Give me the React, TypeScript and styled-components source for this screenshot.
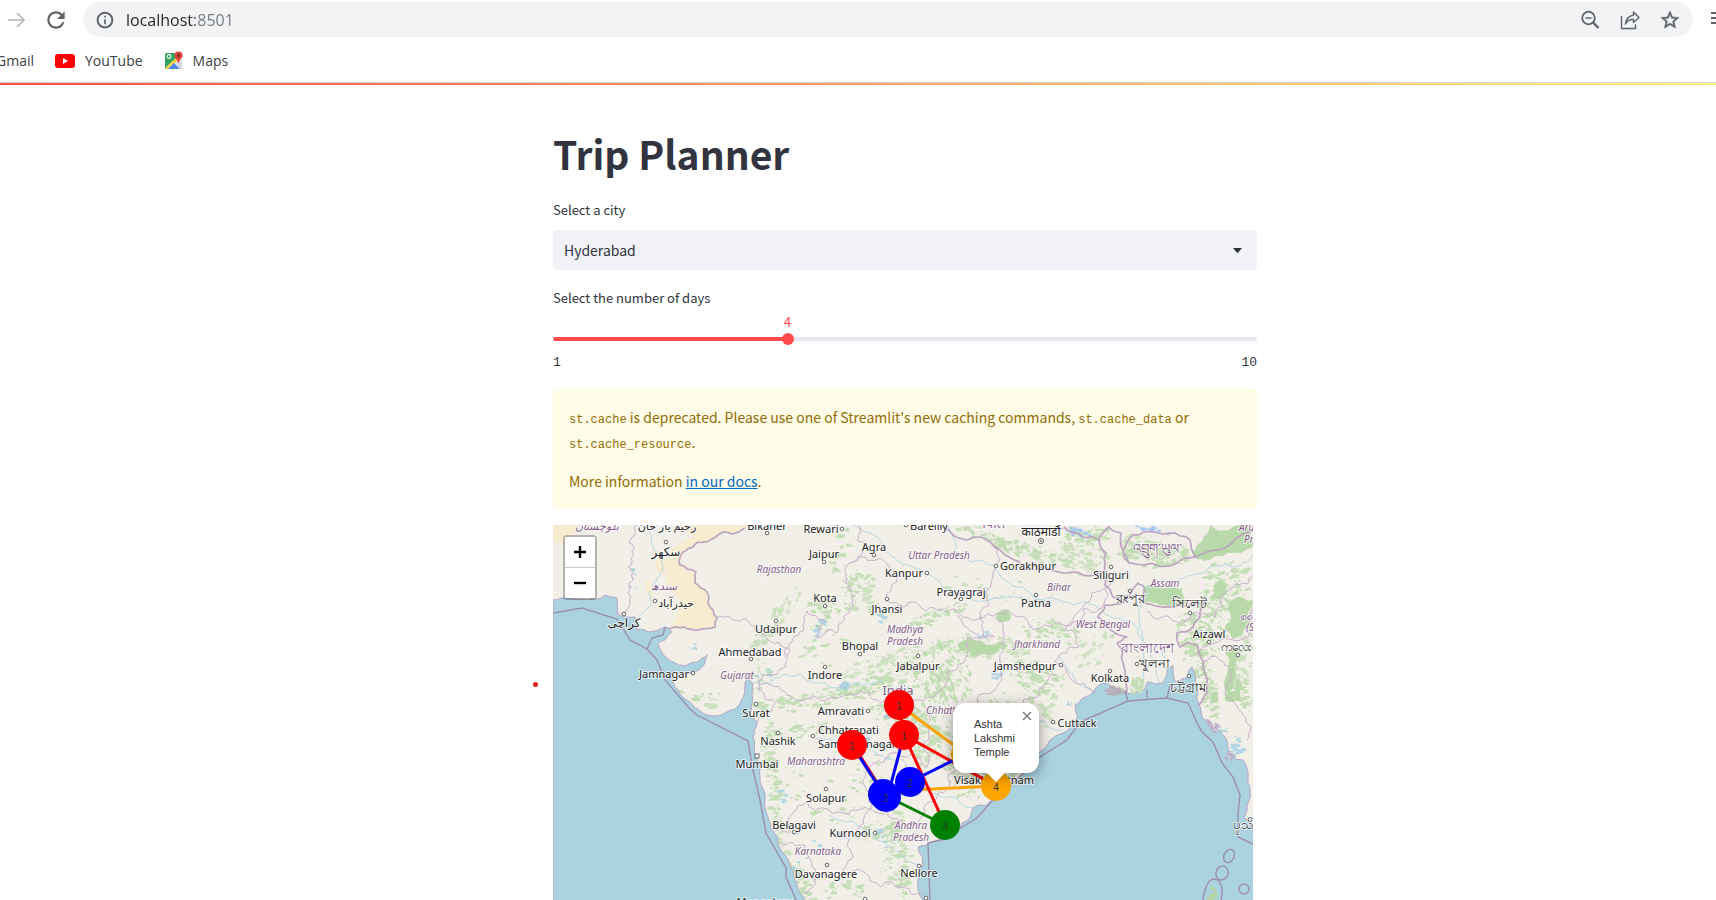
import React, { useState } from "react";
import styled, { createGlobalStyle } from "styled-components";

const GlobalStyle = createGlobalStyle`
  *, *::before, *::after { box-sizing: border-box; }
  body {
    margin: 0;
    background: #ffffff;
    color: #31333f;
    font-family: "Noto Sans CJK JP", "Noto Sans", sans-serif;
  }
`;

/* ---------- page frame ---------- */

const Page = styled.div`
  display: flex;
  flex-direction: column;
  height: 100vh;
  overflow: hidden;
`;

const BrowserChrome = styled.header`
  flex: none;
  overflow: hidden;
  border-bottom: 1px solid #d4d7dc;
  font-family: "Open Sans", "Noto Sans", sans-serif;
`;

const Toolbar = styled.div`
  display: flex;
  align-items: center;
  gap: 14px;
  height: 39px;
  padding-left: 5px;
`;

const IconButton = styled.button<{ $size?: number; $tone?: string }>`
  display: grid;
  place-items: center;
  flex: none;
  width: ${(p) => p.$size ?? 24}px;
  height: ${(p) => p.$size ?? 24}px;
  padding: 0;
  border: 0;
  background: none;
  color: ${(p) => p.$tone ?? "#5f6368"};
`;

const MenuButton = styled(IconButton)`
  margin-right: -15px;
`;

const AddressBar = styled.div`
  display: flex;
  align-items: center;
  flex: 1;
  gap: 16px;
  height: 35px;
  padding: 0 11px 0 12px;
  border-radius: 18px;
  background: #f1f3f4;
`;

const AddressField = styled.label`
  display: flex;
  align-items: center;
  flex: 1;
  gap: 11px;
  color: #5f6368;
`;

const AddressInput = styled.input`
  flex: 1;
  padding: 0;
  border: 0;
  outline: 0;
  font: 16px/24px "Open Sans", "Noto Sans", sans-serif;
  color: transparent;
  background: linear-gradient(90deg, #202124 69px, #74787d 69px);
  -webkit-background-clip: text;
  background-clip: text;
`;

const Bookmarks = styled.nav`
  display: flex;
  align-items: center;
  gap: 21px;
  height: 43px;
  margin-left: -4px;
`;

const Bookmark = styled.a`
  display: flex;
  align-items: center;
  gap: 10px;
  font-size: 14px;
  line-height: 20px;
  color: #3c4043;
  text-decoration: none;
`;

const Viewport = styled.main`
  flex: 1;
  overflow-y: auto;
  scrollbar-width: none;
`;

const Decoration = styled.div`
  height: 2px;
  background: linear-gradient(90deg, #ff4b4b, #fff27c);
`;

const Centered = styled.div`
  padding: 42px 0 80px 94px;
`;

const Column = styled.div`
  width: 100%;
  max-width: 704px;
  margin: 0 auto;
`;

const Title = styled.h1`
  margin: 0 0 21px;
  font-size: 39px;
  font-weight: 700;
  line-height: 52px;
`;

/* ---------- widgets ---------- */

const Field = styled.div`
  margin-bottom: 18px;
`;

const FieldLabel = styled.label`
  display: block;
  font-size: 13px;
  line-height: 20px;
`;

const SelectBox = styled.div`
  position: relative;
  margin-top: 10px;
`;

const Select = styled.select`
  display: block;
  width: 100%;
  height: 40px;
  padding: 0 11px;
  border: 0;
  border-radius: 4px;
  appearance: none;
  background: #f0f2f6;
  color: #31333f;
  font-family: inherit;
  font-size: 14px;
`;

const SelectArrow = styled.svg`
  position: absolute;
  top: 18px;
  right: 15px;
  pointer-events: none;
`;

const SliderValueRow = styled.div`
  position: relative;
  height: 20px;
  margin-top: 4px;
`;

const SliderValue = styled.output`
  position: absolute;
  transform: translateX(-50%);
  font-size: 13px;
  line-height: 20px;
  color: #ff4b4b;
`;

const SliderRow = styled.div`
  position: relative;
  display: flex;
  align-items: center;
  height: 14px;
`;

const Track = styled.div`
  position: absolute;
  inset: 5px 0;
  border-radius: 2px;
`;

const Range = styled.input`
  position: relative;
  flex: none;
  width: calc(100% + 12px);
  height: 12px;
  margin: 0 -6px;
  appearance: none;
  background: transparent;
  outline: 0;
  &::-webkit-slider-thumb {
    appearance: none;
    width: 12px;
    height: 12px;
    border-radius: 50%;
    background: #ff4b4b;
  }
`;

const TickRow = styled.div`
  display: flex;
  justify-content: space-between;
  margin-top: 7px;
  margin-bottom: -2px;
  font-family: "Liberation Mono", monospace;
  font-size: 13px;
  line-height: 20px;
`;

const Alert = styled.div`
  margin-bottom: 16px;
  padding: 16px 16px 15px;
  border-radius: 4px;
  background: #fffce7;
  color: #926c05;
  font-size: 14px;
  line-height: 25px;
`;

const AlertText = styled.p`
  margin: 0;
  & + & {
    margin-top: 14px;
  }
`;

const Code = styled.code`
  font-family: "Liberation Mono", monospace;
  font-size: 12px;
  line-height: 12px;
`;

const DocLink = styled.a`
  color: #0068c9;
`;

/* ---------- map ---------- */

const MapFrame = styled.section`
  position: relative;
  width: 100%;
  max-width: 700px;
  height: 500px;
`;

const MapSvg = styled.svg`
  display: block;
  background: #f2efe9;
`;

const ZoomControl = styled.div`
  position: absolute;
  top: 10px;
  left: 10px;
  display: flex;
  flex-direction: column;
  border: 2px solid rgba(0, 0, 0, 0.25);
  border-radius: 4px;
  background-clip: padding-box;
`;

const ZoomButton = styled.button`
  display: grid;
  place-items: center;
  width: 30px;
  height: 30px;
  padding: 0;
  border: 0;
  background: #ffffff;
  color: #000000;
  & + & {
    height: 31px;
    border-top: 1px solid #cccccc;
  }
`;

const Popup = styled.div`
  position: absolute;
  top: 178px;
  left: 400px;
  width: 86px;
  padding: 14px 16px 14px 21px;
  border-radius: 12px;
  background: #ffffff;
  color: #333333;
  font: 11px/14px "Liberation Sans", Arial, sans-serif;
  box-shadow: 0 3px 14px rgba(0, 0, 0, 0.4);
  &::after {
    content: "";
    position: absolute;
    top: 100%;
    left: 50%;
    margin-left: -9px;
    border: 9px solid transparent;
    border-top-color: #ffffff;
    border-bottom: 0;
  }
`;

const PopupClose = styled.button`
  position: absolute;
  top: 8px;
  right: 7px;
  display: grid;
  place-items: center;
  width: 10px;
  height: 10px;
  padding: 0;
  border: 0;
  background: none;
  color: #757575;
`;

const StrayDot = styled.span`
  position: absolute;
  top: 157px;
  left: -20px;
  width: 5px;
  height: 5px;
  border-radius: 50%;
  background: #e6231e;
`;

type Pt = [number, number];

const parse = (s: string): Pt[] =>
  s.trim().split(/\s+/).map((p) => p.split(",").map(Number) as Pt);

const makeRandom = (seed: number) => () => {
  seed = (seed * 1664525 + 1013904223) % 4294967296;
  return seed / 4294967296;
};

/* Subdivides a coarse line so that it wanders like a surveyed border. */
const rough = (s: string, seed: number, amount = 0.16, depth = 3): string => {
  const rnd = makeRandom(seed);
  let pts = parse(s);
  for (let d = 0; d < depth; d++) {
    const next: Pt[] = [pts[0]];
    for (let i = 1; i < pts.length; i++) {
      const [ax, ay] = pts[i - 1];
      const [bx, by] = pts[i];
      const off = (rnd() - 0.5) * 2 * amount;
      next.push([(ax + bx) / 2 - (by - ay) * off, (ay + by) / 2 + (bx - ax) * off], [bx, by]);
    }
    pts = next;
  }
  return pts.map(([x, y]) => `${x.toFixed(1)},${y.toFixed(1)}`).join(" ");
};

/* Small irregular patches of vegetation spread through an ellipse. */
const scatter = (cx: number, cy: number, rx: number, ry: number, n: number, tilt: number, seed: number) => {
  const rnd = makeRandom(seed);
  const c = Math.cos((tilt * Math.PI) / 180);
  const s = Math.sin((tilt * Math.PI) / 180);
  let d = "";
  for (let i = 0; i < n; i++) {
    const a = rnd() * Math.PI * 2;
    const r = Math.pow(rnd(), 0.6);
    const ex = Math.cos(a) * r * rx;
    const ey = Math.sin(a) * r * ry;
    const x = cx + ex * c - ey * s;
    const y = cy + ex * s + ey * c;
    const size = 0.5 + rnd() * rnd() * 3.4;
    for (let k = 0; k < 7; k++) {
      const t = (k / 7) * Math.PI * 2;
      const q = size * (0.4 + rnd() * 0.9);
      const px = Math.cos(t) * q * 1.5;
      const py = Math.sin(t) * q * 0.8;
      d += `${k ? "L" : "M"}${(x + px * c - py * s).toFixed(1)} ${(y + px * s + py * c).toFixed(1)}`;
    }
    d += "Z";
  }
  return d;
};

const ARABIAN_SEA =
  "0,75 17,73 34,75 52,70 64,73 64,88 72,92 82,92 84,105 97,107 112,102 119,107 112,115 105,118 109,128 120,137 132,141 144,137 154,130 149,142 140,148 125,148 119,146 119,154 122,162 130,172 137,177 145,184 159,191 174,187 187,179 190,173 194,153 199,158 199,168 199,178 197,190 204,198 200,212 204,232 207,252 212,275 215,292 219,305 224,312 229,327 236,338 242,355 247,368 252,375 262,400 275,440 300,500 0,500";

const BAY_OF_BENGAL =
  "370,500 370,375 365,355 369,342 365,322 377,318 394,313 409,298 417,292 420,283 434,280 442,272 457,262 474,245 484,230 497,215 510,208 524,193 522,180 530,173 540,168 550,158 562,165 574,168 590,165 594,157 610,158 614,145 620,140 624,158 634,152 639,142 644,162 644,175 649,192 657,202 672,212 677,232 690,235 695,252 697,265 695,278 691,293 700,305 700,500";

const DESERTS = [
  "125,0 197,0 179,9 170,7 154,17 145,17 140,22 130,27 127,40 143,47 142,58 154,67 155,78 164,93 162,102 140,105 132,102 118,102 124,90 127,75 113,60 114,40 118,25 130,17 140,12",
  "103,35 110,30 114,38 112,50 104,46",
  "92,56 98,55 100,68 98,74 93,64",
  "0,0 26,0 20,10 14,18 0,18",
];

const FORESTS = [
  "640,30 643,22 650,12 657,0 692,0 698,8 700,22 674,28 657,35 647,34",
  "591,62 600,60 618,62 630,63 634,75 622,80 607,80 592,77",
  "405,118 420,115 447,116 455,122 440,130 420,131 408,126",
  "675,78 688,72 700,74 700,100 690,108 680,114 672,104 678,92",
  "672,128 680,124 684,134 682,155 676,168 671,160 675,145",
  "660,62 668,55 674,66 668,74 661,72",
  "444,88 452,84 458,92 452,97 444,95",
  "659,168 664,166 664,178 659,178",
  "683,155 687,155 687,176 673,176 674,166 682,166",
];

const CLUSTERS: number[][] = [
  [226, 92, 36, 8, 70, -55], [268, 82, 22, 8, 40, 15], [298, 65, 10, 22, 60, 8], [318, 70, 8, 22, 60, -10],
  [286, 30, 8, 32, 30, 12], [380, 93, 40, 7, 80, -22], [340, 135, 55, 9, 150, -16], [330, 155, 46, 9, 130, -18],
  [395, 145, 34, 20, 130, 60], [432, 122, 52, 12, 140, 5], [380, 170, 24, 26, 130, 70], [345, 190, 30, 12, 80, 10],
  [370, 212, 14, 34, 130, -6], [400, 215, 20, 30, 120, 20], [440, 195, 24, 30, 90, 40], [478, 190, 24, 32, 130, 30],
  [486, 152, 30, 16, 120, 12], [500, 108, 30, 13, 90, 12], [540, 125, 26, 14, 45, -30], [420, 252, 26, 22, 130, -35],
  [452, 240, 24, 14, 80, -30], [340, 320, 10, 44, 120, 6], [352, 350, 8, 28, 60, 4], [326, 306, 24, 10, 60, -15],
  [232, 338, 7, 34, 110, -14], [248, 360, 8, 20, 60, -10], [222, 270, 6, 44, 90, -6], [216, 225, 8, 30, 80, 0],
  [245, 205, 32, 8, 60, -8], [240, 178, 46, 8, 80, -6], [290, 168, 34, 8, 70, -4], [206, 150, 10, 20, 40, 20],
  [150, 168, 26, 8, 20, 10], [158, 181, 9, 3, 22, 5], [430, 10, 34, 6, 70, 22], [480, 28, 44, 8, 120, 16],
  [530, 30, 26, 20, 140, 20], [535, 10, 24, 10, 60, 0], [604, 30, 34, 13, 200, 0], [580, 20, 20, 10, 80, -20],
  [660, 95, 20, 40, 150, 12], [672, 60, 26, 24, 130, -20], [690, 132, 10, 40, 110, 6], [640, 120, 14, 34, 80, -16],
  [655, 160, 9, 36, 90, -14], [560, 165, 10, 5, 20, 0], [285, 285, 24, 14, 20, 0], [255, 255, 26, 24, 18, 0],
  [390, 55, 60, 14, 18, 10], [460, 65, 40, 14, 16, 8], [268, 120, 26, 22, 30, 0], [300, 230, 34, 24, 26, 0],
  [282, 365, 34, 14, 40, 0], [318, 258, 24, 16, 16, 0], [210, 112, 18, 8, 30, -40], [695, 170, 7, 20, 30, 0],
];

const WATERS: number[][] = [
  [266, 103, 5, 9, 14, 20], [292, 160, 6, 4, 12, 0], [430, 110, 5, 5, 10, 0], [682, 224, 8, 14, 26, -10],
  [668, 205, 6, 6, 14, 0], [141, 123, 5, 5, 8, 30], [82, 42, 8, 30, 9, 0], [330, 93, 3, 8, 8, 0],
  [445, 152, 7, 4, 10, 0], [230, 270, 4, 8, 8, 0], [520, 178, 5, 4, 8, 0], [214, 150, 12, 6, 8, 0],
  [315, 210, 60, 24, 18, 0], [260, 330, 30, 40, 12, 0], [340, 325, 16, 40, 10, 0],
];

const RIVERS = [
  "300,0 330,20 350,40 380,52 400,66 430,76 458,72 483,74 520,80 548,84 575,96 590,116 600,134 606,158",
  "394,0 402,26 440,40 470,62 500,76",
  "700,30 680,42 650,48 620,56 596,62 590,76 586,96 590,116",
  "94,0 100,22 110,40 100,60 98,80 84,96",
  "330,155 300,158 262,158 230,150 199,158",
  "700,300 690,280 696,262",
  "420,283 400,272 370,262 350,235 320,225 290,220 262,214",
  "510,205 480,190 452,180 430,178",
  "540,168 520,150 506,130",
  "369,342 350,330 322,312 300,296 276,290",
  "594,165 592,140 588,118",
  "616,150 612,132 604,120",
];

const BORDERS = [
  "84,0 76,18 75,42 80,55 78,72 64,88",
  "164,93 184,95 197,98 210,108 227,118 237,125 232,142 214,150 206,165 222,178 204,198",
  "306,0 304,15 314,22 300,37 292,58 300,72 296,88 284,108 264,112 272,95 254,86 250,100 238,118 232,132",
  "300,37 325,34 342,46 338,66 334,76 346,84 366,80 382,84 402,84 428,92 430,112 442,112",
  "440,20 446,32 440,52 436,80 428,94",
  "206,160 234,170 272,176 300,170 328,178 370,176 384,168 394,150 412,136 414,112 440,112",
  "442,92 450,118 448,150 424,174 412,206",
  "372,182 376,210 374,242 338,228 320,238 310,258 318,284 296,290 254,276 236,308 218,304",
  "318,284 296,308 300,332 288,348 328,362 370,368",
  "318,284 348,296 380,276 396,262 412,238 432,212 442,196 484,172 504,150",
  "426,94 464,92 502,98 530,82 554,62 558,52",
  "530,84 512,104 526,122 502,136 516,152 544,168",
  "553,62 546,84 530,84",
  "594,86 600,92 620,96 640,88 662,92 672,68 700,50",
  "644,130 662,118 690,114 700,82",
  "650,140 664,132 676,142 672,170 690,190 694,215",
  "228,322 252,320 262,344 250,368",
  "404,90 410,100 426,110",
];

const NATION_BORDERS = [
  "192,3 179,9 170,7 154,17 145,17 140,22 130,27 127,40 143,47 142,58 154,67 155,78 164,93 162,102 140,105 132,102 112,103",
  "385,0 398,8 413,15 427,12 440,20 452,30 469,40 490,42 511,48 530,50 551,48 553,28 546,15 530,12 511,2",
  "546,15 556,2 568,8 570,25 576,38",
  "570,25 580,10 590,7 617,8 637,15 642,32 624,38 590,40 576,38 570,30",
  "551,48 552,60 560,72 572,76 585,58 591,62 591,78 617,82 637,80 654,75 647,92 640,102 624,108 627,122 637,118 645,122 650,142 654,168 645,180",
  "572,76 552,80 545,92 574,112 564,118 570,138 574,168",
  "642,32 670,24 700,6",
];

const SEA_LIMITS = [
  "0,88 29,83 64,94 77,115 94,124 104,135 112,155 137,184 144,190 195,216 200,245 207,275 213,308 233,343 233,352 252,395 280,460",
  "94,124 99,113 110,110 112,102",
  "377,400 377,375 375,318 394,313 409,302 424,293 440,275 460,258 487,232 514,215 527,197 575,176 614,173 635,178 644,198 649,207 660,217 669,238 680,252 687,270 685,288 685,312 700,319",
  "575,176 572,166",
  "594,175 594,165",
  "614,173 617,160",
];

type Label = { t: string; x: number; y: number; k?: "state" | "nation"; a?: "start"; s?: number };

const LABELS: Label[] = [
  { t: "بلوچستان", x: 44, y: 0, k: "state", s: 11 },
  { t: "رحیم یار خان", x: 114, y: 0 },
  { t: "سکھر", x: 113, y: 26, s: 12 },
  { t: "سندھ", x: 111, y: 60, k: "state", s: 11 },
  { t: "حیدرآباد", x: 123, y: 77 },
  { t: "کراچی", x: 71, y: 97, s: 12 },
  { t: "Bikaner", x: 214, y: 0 },
  { t: "Rajasthan", x: 226, y: 44, k: "state" },
  { t: "Udaipur", x: 223, y: 103 },
  { t: "Ahmedabad", x: 197, y: 126 },
  { t: "Jamnagar", x: 111, y: 148 },
  { t: "Gujarat", x: 184, y: 150, k: "state" },
  { t: "Surat", x: 203, y: 187 },
  { t: "Nashik", x: 225, y: 215 },
  { t: "Mumbai", x: 204, y: 238 },
  { t: "Belagavi", x: 241, y: 299 },
  { t: "Mangaluru", x: 212, y: 376 },
  { t: "Rewari", x: 268, y: 3 },
  { t: "Jaipur", x: 271, y: 28 },
  { t: "Agra", x: 321, y: 21 },
  { t: "Uttar Pradesh", x: 386, y: 30, k: "state" },
  { t: "Kanpur", x: 351, y: 47 },
  { t: "Kota", x: 272, y: 72 },
  { t: "Jhansi", x: 334, y: 83 },
  { t: "Prayagraj", x: 408, y: 66 },
  { t: "Madhya", x: 352, y: 104, k: "state" },
  { t: "Pradesh", x: 352, y: 116, k: "state" },
  { t: "Bhopal", x: 307, y: 120 },
  { t: "Jabalpur", x: 365, y: 140 },
  { t: "Indore", x: 272, y: 149 },
  { t: "India", x: 345, y: 165, k: "nation", s: 13 },
  { t: "Bareilly", x: 376, y: 0 },
  { t: "नेपाल", x: 439, y: -2, k: "nation", s: 13 },
  { t: "Gorakhpur", x: 475, y: 40 },
  { t: "काठमाडौं", x: 488, y: 6, s: 12 },
  { t: "Siliguri", x: 558, y: 49 },
  { t: "འབྲུག་ཡུལ་", x: 604, y: 23, k: "nation", s: 13 },
  { t: "Assam", x: 612, y: 58, k: "state" },
  { t: "Bihar", x: 506, y: 62, k: "state" },
  { t: "রংপুর", x: 577, y: 73, s: 13 },
  { t: "Patna", x: 483, y: 77 },
  { t: "সিলেট", x: 636, y: 78, s: 13 },
  { t: "West Bengal", x: 550, y: 99, k: "state" },
  { t: "Aizawl", x: 656, y: 108 },
  { t: "Jharkhand", x: 484, y: 119, k: "state" },
  { t: "বাংলাদেশ", x: 594, y: 122, k: "nation", s: 14 },
  { t: "ကလေး", x: 668, y: 121, a: "start", s: 12 },
  { t: "Jamshedpur", x: 472, y: 140 },
  { t: "খুলনা", x: 601, y: 138, s: 13 },
  { t: "Kolkata", x: 557, y: 152 },
  { t: "চট্টগ্রাম", x: 635, y: 162, s: 13 },
  { t: "Arunachal", x: 686, y: 2, k: "state", a: "start" },
  { t: "Pradesh", x: 691, y: 14, k: "state", a: "start" },
  { t: "စစ်ကိုင်း", x: 687, y: 90, k: "state", a: "start", s: 11 },
  { t: "(Sagaing)", x: 693, y: 102, k: "state", a: "start" },
  { t: "Amravati", x: 288, y: 185 },
  { t: "Chhatrapati", x: 265, y: 204, a: "start" },
  { t: "Sambhajinagar", x: 265, y: 218, a: "start" },
  { t: "Maharashtra", x: 263, y: 236, k: "state" },
  { t: "Chhattisgarh", x: 373, y: 185, k: "state", a: "start" },
  { t: "Solapur", x: 273, y: 272 },
  { t: "Kurnool", x: 297, y: 307 },
  { t: "Andhra", x: 358, y: 300, k: "state" },
  { t: "Pradesh", x: 358, y: 312, k: "state" },
  { t: "Karnataka", x: 265, y: 326, k: "state" },
  { t: "Davanagere", x: 273, y: 348 },
  { t: "Nellore", x: 366, y: 347 },
  { t: "Visakhapatnam", x: 441, y: 254 },
  { t: "Cuttack", x: 524, y: 197 },
  { t: "ပုသိမ်", x: 680, y: 299, a: "start", s: 13 },
];

const TOWNS = parse(
  "113,17 102,76 71,89 214,8 223,96 198,134 140,148 203,179 225,208 241,307 289,4 271,37 321,30 374,48 272,81 334,74 408,74 307,129 365,131 272,142 353,0 443,41 558,42 577,66 483,70 637,88 656,117 685,130 508,140 584,139 557,146 636,151 315,186 260,211 273,264 322,308 274,340 366,341 500,197 312,374 373,373"
);

const ROUTES = [
  { from: [346, 180], to: [413, 229], color: "orange" },
  { from: [357, 265], to: [443, 261], color: "orange" },
  { from: [346, 180], to: [351, 210], color: "red" },
  { from: [351, 210], to: [443, 261], color: "red" },
  { from: [300, 220], to: [332, 270], color: "red" },
  { from: [351, 210], to: [392, 300], color: "red" },
  { from: [331, 270], to: [392, 300], color: "green" },
  { from: [299, 220], to: [331, 270], color: "blue" },
  { from: [351, 210], to: [335, 270], color: "blue" },
  { from: [413, 229], to: [357, 257], color: "blue" },
];

const STOPS = [
  { x: 346, y: 180, color: "red", day: "1" },
  { x: 351, y: 210, color: "red", day: "1" },
  { x: 299, y: 220, color: "red", day: "1" },
  { x: 413, y: 229, color: "orange", day: "4" },
  { x: 357, y: 257, color: "blue", day: "2" },
  { x: 330, y: 269, color: "blue", day: "" },
  { x: 333, y: 272, color: "blue", day: "2" },
  { x: 392, y: 300, color: "green", day: "3" },
  { x: 443, y: 261, color: "orange", day: "4" },
];

const MapLabel = styled.text<{ $kind?: "state" | "nation"; $size: number }>`
  font-family: "Noto Sans", "DejaVu Sans", sans-serif;
  font-size: ${(p) => p.$size}px;
  font-style: ${(p) => (p.$kind === "state" ? "italic" : "normal")};
  fill: ${(p) => (p.$kind ? "#855a88" : "#222222")};
  stroke: rgba(255, 255, 255, 0.7);
  stroke-width: 2px;
  stroke-linejoin: round;
  paint-order: stroke;
  dominant-baseline: central;
`;

const StopNumber = styled.text`
  font: 10px "Liberation Sans", Arial, sans-serif;
  fill: #333333;
  text-anchor: middle;
  dominant-baseline: central;
`;

const Terrain = React.memo(() => (
  <g>
    {DESERTS.map((p, i) => (
      <polygon key={i} points={p} fill="#f7ecd0" />
    ))}
    <g fill="#b9d9ab">
      {FORESTS.map((p, i) => (
        <polygon key={i} points={rough(p + " " + p.split(" ")[0], 60 + i, 0.2, 2)} />
      ))}
      {CLUSTERS.map(([x, y, rx, ry, n, tilt], i) => (
        <path key={i} d={scatter(x, y, rx, ry, n, tilt, i * 97 + 11)} opacity={i % 3 ? 0.8 : 0.65} />
      ))}
    </g>
    <g fill="none" stroke="#b5d9e4" strokeWidth="1">
      {RIVERS.map((p, i) => (
        <polyline key={i} points={rough(p, i + 5)} />
      ))}
    </g>
    <g fill="#a3d0e0">
      {WATERS.map(([x, y, rx, ry, n, tilt], i) => (
        <path key={i} d={scatter(x, y, rx, ry, n, tilt, i * 53 + 7)} opacity="0.8" />
      ))}
    </g>
    <g fill="#aad3df" stroke="#b7a6c4" strokeWidth="1">
      <polygon points={rough(ARABIAN_SEA, 3, 0.12, 2)} />
      <polygon points={rough(BAY_OF_BENGAL, 8, 0.12, 2)} />
    </g>
    <path d={scatter(563, 166, 11, 5, 60, 0, 404)} fill="#b9aebc" />
    <path d={scatter(584, 161, 8, 8, 50, 60, 405)} fill="#c5deb8" />
    <path d={scatter(678, 232, 5, 6, 8, 60, 406) + scatter(660, 200, 8, 5, 14, 40, 407)} fill="#f2efe9" stroke="#b7a6c4" strokeWidth="1" />
    <path d={scatter(525, 8, 18, 5, 16, 20, 408) + scatter(600, 4, 22, 4, 14, 10, 409)} fill="#a5c8f2" />
    <g fill="none" stroke="#c9b2cb" strokeWidth="1">
      {BORDERS.map((p, i) => (
        <polyline key={i} points={rough(p, i + 31, 0.26)} />
      ))}
    </g>
    <g fill="none" stroke="#bca5bf" strokeWidth="1.7" strokeLinejoin="round">
      {NATION_BORDERS.map((p, i) => (
        <polyline key={i} points={rough(p, i + 71, 0.14, 2)} />
      ))}
    </g>
    <g fill="none" stroke="#9b8fb0" strokeWidth="1.4">
      {SEA_LIMITS.map((p, i) => (
        <polyline key={i} points={p} />
      ))}
      <ellipse cx="676" cy="331" rx="5" ry="7" transform="rotate(25 676 331)" />
      <ellipse cx="669" cy="348" rx="6" ry="7" transform="rotate(20 669 348)" />
      <circle cx="691" cy="364" r="5" />
      <path d="M649 380C651 366 655 354 661 354S670 362 669 370L667 380" />
    </g>
    <path d={scatter(660, 370, 3, 8, 16, 10, 410)} fill="#b4d4a5" />
  </g>
));

const TripMap = () => (
  <MapFrame aria-label="Trip map">
    <MapSvg width="100%" height="500" viewBox="0 0 700 500" preserveAspectRatio="xMinYMin slice">
      <Terrain />
      <g fill="#ffffff" stroke="#666666" strokeWidth="1">
        {TOWNS.map(([x, y], i) => (
          <circle key={i} cx={x} cy={y} r="1.8" />
        ))}
        <rect x="202" y="229" width="4" height="4" />
        <circle cx="488" cy="16" r="2.6" />
        <circle cx="488" cy="16" r="0.8" />
      </g>
      {LABELS.map((l, i) => (
        <MapLabel key={i} x={l.x} y={l.y} $kind={l.k} $size={l.s ?? (l.k ? 10 : 11)} textAnchor={l.a ?? "middle"}>
          {l.t}
        </MapLabel>
      ))}
      {ROUTES.map((r, i) => (
        <line key={i} x1={r.from[0]} y1={r.from[1]} x2={r.to[0]} y2={r.to[1]} stroke={r.color} strokeWidth="3" />
      ))}
      {STOPS.map((s, i) => (
        <g key={i}>
          <circle cx={s.x} cy={s.y} r="15" fill={s.color} />
          <StopNumber x={s.x} y={s.y + 1}>{s.day}</StopNumber>
        </g>
      ))}
    </MapSvg>
    <ZoomControl>
      <ZoomButton aria-label="Zoom in">
        <svg width="14" height="14" viewBox="0 0 14 14"><path d="M7 1v12M1 7h12" stroke="#000" strokeWidth="2.4" /></svg>
      </ZoomButton>
      <ZoomButton aria-label="Zoom out">
        <svg width="14" height="14" viewBox="0 0 14 14"><path d="M1 7h12" stroke="#000" strokeWidth="2.4" /></svg>
      </ZoomButton>
    </ZoomControl>
    <Popup role="dialog" aria-label="Place">
      Ashta Lakshmi Temple
      <PopupClose aria-label="Close">
        <svg width="10" height="10" viewBox="0 0 10 10"><path d="M1 1l8 8M9 1l-8 8" stroke="currentColor" strokeWidth="1.3" /></svg>
      </PopupClose>
    </Popup>
    <StrayDot />
  </MapFrame>
);

/* ---------- browser icons ---------- */

const YouTubeLogo = () => (
  <svg width="20" height="14" viewBox="0 0 20 14">
    <rect width="20" height="14" rx="3" fill="#ff0000" />
    <path d="M8 4l5 3-5 3z" fill="#fff" />
  </svg>
);

const MapsLogo = () => (
  <svg width="19" height="19" viewBox="0 0 19 19">
    <path d="M2 2h12v6L3 18H1V3z" fill="#34a462" />
    <path d="M14 8l4 3v7H1z" fill="#e4e6e9" />
    <path d="M1 17L15 4l2 3L3 18.3z" fill="#fbd04b" />
    <path d="M4 18l6-6 6 6z" fill="#4a89f3" />
    <path d="M12 12l5 6h1V9z" fill="#d5d8dc" />
    <circle cx="5" cy="5.5" r="1.9" fill="none" stroke="#fff" strokeWidth="1.1" />
    <path d="M14.500 0.500a4 4 0 0 1 4 4c0 3-3.200 4-4 8-.8-4-4-5-4-8a4 4 0 0 1 4-4z" fill="#e0443a" />
    <circle cx="14.5" cy="4.5" r="1.5" fill="#7b241f" />
  </svg>
);

const Browser = () => (
  <BrowserChrome>
    <Toolbar>
      <IconButton aria-label="Forward" $tone="#b4b6b9">
        <svg width="24" height="24" viewBox="0 0 24 24" fill="none" stroke="currentColor" strokeWidth="1.7">
          <path d="M3 12h16M12 5l7 7-7 7" />
        </svg>
      </IconButton>
      <IconButton aria-label="Reload" $size={26}>
        <svg width="26" height="26" viewBox="0 0 24 24" fill="currentColor">
          <path d="M17.65 6.35C16.2 4.9 14.21 4 12 4c-4.42 0-7.99 3.58-7.99 8s3.57 8 7.99 8c3.73 0 6.84-2.55 7.73-6h-2.08c-.82 2.33-3.04 4-5.65 4-3.31 0-6-2.69-6-6s2.69-6 6-6c1.66 0 3.14.69 4.22 1.78L13 11h7V4l-2.35 2.35z" />
        </svg>
      </IconButton>
      <AddressBar>
        <AddressField>
          <svg width="20" height="20" viewBox="0 0 24 24" fill="currentColor">
            <path d="M11 7h2v2h-2zm0 4h2v6h-2zm1-9C6.48 2 2 6.48 2 12s4.48 10 10 10 10-4.48 10-10S17.52 2 12 2zm0 17.600c-4.200 0-7.600-3.400-7.600-7.600s3.400-7.600 7.600-7.600 7.600 3.400 7.600 7.600-3.400 7.600-7.600 7.600z" />
          </svg>
          <AddressInput aria-label="Address" defaultValue="localhost:8501" spellCheck={false} />
        </AddressField>
        <IconButton aria-label="Zoom">
          <svg width="24" height="24" viewBox="0 0 24 24" fill="none" stroke="currentColor" strokeWidth="1.8">
            <circle cx="10.5" cy="10" r="6.3" />
            <path d="M15 14.500l5.500 5.500" strokeWidth="2.4" />
            <path d="M7.500 10h6" strokeWidth="1.5" />
          </svg>
        </IconButton>
        <IconButton aria-label="Share">
          <svg width="24" height="24" viewBox="0 0 24 24" fill="none" stroke="currentColor" strokeWidth="1.4">
            <path d="M3.500 8v12.500h14v-4" />
            <path d="M15.500 4l5.500 5.500-5.500 5v-3C11.500 11.200 9 13 7.500 16c.5-5 3.500-8.300 8-8.800z" strokeLinejoin="round" />
          </svg>
        </IconButton>
        <IconButton aria-label="Bookmark">
          <svg width="22" height="22" viewBox="0 0 24 24" fill="currentColor">
            <path d="M22 9.240l-7.190-.62L12 2 9.190 8.630 2 9.240l5.460 4.730L5.820 21 12 17.270 18.180 21l-1.630-7.030L22 9.240zM12 15.400l-3.760 2.270 1-4.280-3.320-2.880 4.380-.38L12 6.100l1.710 4.040 4.380.38-3.320 2.880 1 4.280L12 15.400z" stroke="currentColor" strokeWidth="0.5" />
          </svg>
        </IconButton>
      </AddressBar>
      <MenuButton aria-label="Media controls">
        <svg width="24" height="24" viewBox="0 0 24 24" stroke="currentColor" strokeWidth="2">
          <path d="M4 5h12M4 10h12M4 15h8" />
        </svg>
      </MenuButton>
    </Toolbar>
    <Bookmarks>
      <Bookmark href="#gmail">Gmail</Bookmark>
      <Bookmark href="#youtube"><YouTubeLogo />YouTube</Bookmark>
      <Bookmark href="#maps"><MapsLogo />Maps</Bookmark>
    </Bookmarks>
  </BrowserChrome>
);

const MIN_DAYS = 1;
const MAX_DAYS = 10;

export default function App() {
  const [days, setDays] = useState(4);
  const percent = ((days - MIN_DAYS) / (MAX_DAYS - MIN_DAYS)) * 100;

  return (
    <Page>
      <GlobalStyle />
      <Browser />
      <Viewport>
        <Decoration />
        <Centered>
          <Column>
            <Title>Trip Planner</Title>
            <Field>
              <FieldLabel htmlFor="city">Select a city</FieldLabel>
              <SelectBox>
                <Select id="city" defaultValue="Hyderabad">
                  <option>Hyderabad</option>
                </Select>
                <SelectArrow width="9" height="5" viewBox="0 0 9 5">
                  <path d="M0 0h9L5.200 4.600a1 1 0 0 1-1.400 0z" fill="#31333f" />
                </SelectArrow>
              </SelectBox>
            </Field>
            <Field>
              <FieldLabel htmlFor="days">Select the number of days</FieldLabel>
              <SliderValueRow>
                <SliderValue htmlFor="days" style={{ left: `${percent}%` }}>{days}</SliderValue>
              </SliderValueRow>
              <SliderRow>
                <Track style={{ backgroundImage: `linear-gradient(90deg, #ff4b4b ${percent}%, #e4e7f0 ${percent}%)` }} />
                <Range
                  id="days"
                  type="range"
                  min={MIN_DAYS}
                  max={MAX_DAYS}
                  value={days}
                  onChange={(e) => setDays(Number(e.target.value))}
                />
              </SliderRow>
              <TickRow>
                <span>{MIN_DAYS}</span>
                <span>{MAX_DAYS}</span>
              </TickRow>
            </Field>
            <Alert role="alert">
              <AlertText>
                <Code>st.cache</Code> is deprecated. Please use one of Streamlit's new caching commands,{" "}
                <Code>st.cache_data</Code> or <Code>st.cache_resource</Code>.
              </AlertText>
              <AlertText>
                More information <DocLink href="#docs">in our docs</DocLink>.
              </AlertText>
            </Alert>
            <TripMap />
          </Column>
        </Centered>
      </Viewport>
    </Page>
  );
}
